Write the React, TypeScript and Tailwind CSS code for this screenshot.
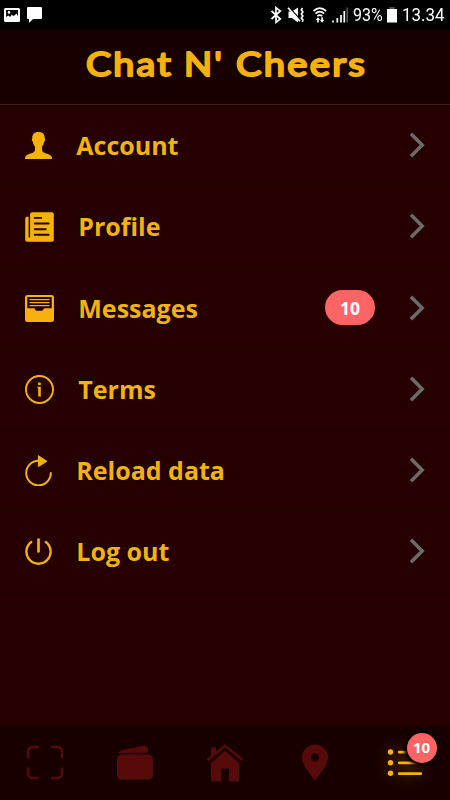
import React from 'react';

type MenuItem = {
    label: string;
    icon: React.ReactNode;
    badge?: number;
}

function Wordmark() {
    return (
        <svg width="290" height="50" viewBox="80 38 290 50" fill="#f5b20d" stroke="#f5b20d" strokeWidth="2.100" strokeLinejoin="round" className="font-[Lato,sans-serif] text-[33.500px] font-normal tracking-[2px]">
            <text x="86" y="75.900" textLength="87" lengthAdjust="spacingAndGlyphs">Chat</text>
            <text x="184" y="75.900" textLength="40" lengthAdjust="spacingAndGlyphs">N'</text>
            <text x="236" y="75.900" textLength="131" lengthAdjust="spacingAndGlyphs">Cheers</text>
        </svg>
    )
}

function UserIcon() {
    return (
        <svg width="27" height="27" viewBox="0 0 27 27" fill="currentColor">
            <path d="M13.500 0C9.200 0 7 2.600 7.200 6.600c-.7.6-.3 2.600.7 3.300.4 2 1.200 3.500 2 4.500v3.600C9.600 20.600 6.500 21.300 3.600 22.200 1.200 23 0 24.500 0 27h27c0-2.500-1.200-4-3.600-4.800-2.900-.9-6-1.600-6.300-4.200v-3.600c.8-1 1.600-2.500 2-4.500 1-.7 1.400-2.700.7-3.300C20 2.600 17.800 0 13.500 0z"/>
        </svg>
    )
}

function DocumentIcon() {
    return (
        <svg width="29" height="30" viewBox="0 0 29 30">
            <path fill="currentColor" d="M7.500 0.300H27a1.800 1.800 0 0 1 1.800 1.800V28a1.800 1.800 0 0 1-1.800 1.800H2.200A2 2 0 0 1 .2 27.800V6.800Q.2 4.800 2.200 4.800H3.600V25.600h1.500V2.100Q5.100.300 7.500.300z"/>
            <path stroke="#260000" strokeWidth="1.900" strokeLinecap="round" d="M9.700 5.900h6.500M9.700 11.500h14M9.700 17.200h11M9.700 22.800h14"/>
        </svg>
    )
}

function InboxIcon() {
    return (
        <svg width="29" height="27" viewBox="0 0 29 27">
            <rect width="29" height="27" rx="2.500" fill="currentColor"/>
            <path fill="#260000" d="M2.300 2h24.400v11.300h-7.400c-1 0-.8 2.500-2.500 2.500h-5.200c-1.700 0-1.200-2.500-2.600-2.500H2.300z"/>
            <path stroke="currentColor" strokeWidth="1.300" d="M4.500 4.700h20M4.500 7.700h20M4.500 10.700h20"/>
        </svg>
    )
}

function InfoIcon() {
    return (
        <svg width="29" height="29" viewBox="0 0 29 29" fill="none">
            <circle cx="14.500" cy="14.500" r="13.500" stroke="currentColor" strokeWidth="1.900"/>
            <rect x="13.100" y="7.600" width="2.700" height="2.500" rx=".5" fill="currentColor"/>
            <path fill="currentColor" d="M12.500 11.700H15.800V21.600H13.200V13.200h-.7z"/>
        </svg>
    )
}

function ReloadIcon() {
    return (
        <svg width="27" height="31" viewBox="0 0 27 31" fill="none">
            <path stroke="currentColor" strokeWidth="2" strokeLinecap="round" d="M13.500 5.800A12.300 12.300 0 1 0 25.800 18.100"/>
            <path fill="currentColor" stroke="currentColor" strokeLinejoin="round" d="M13.400.700L21.900 6.300l-8.500 5.300z"/>
        </svg>
    )
}

function PowerIcon() {
    return (
        <svg width="27" height="27" viewBox="0 0 27 27" fill="none" stroke="currentColor" strokeLinecap="round">
            <path strokeWidth="2.300" d="M6.200 4A12.100 12.100 0 1 0 20.800 4"/>
            <path strokeWidth="2.700" d="M13.500 1.500v12"/>
        </svg>
    )
}

function StatusBar() {
    return (
        <div className="flex h-[30px] shrink-0 items-center bg-black font-[Roboto,sans-serif] text-white">
            <svg width="48" height="30" viewBox="0 0 48 30">
                <rect x="4" y="8" width="16" height="14" rx="1.500" fill="white"/>
                <path fill="black" d="M6 10h12v6.500l-1.300-3-3 2.500-2-1.300-1.700 2.300-1.500-1.500L6.200 17z"/>
                <circle cx="9" cy="12.400" r="1.300" fill="white"/>
                <path fill="white" d="M28 7h13a1 1 0 0 1 1 1v10a1 1 0 0 1-1 1h-8l-4 4v-4h-1a1 1 0 0 1-1-1V8a1 1 0 0 1 1-1z"/>
            </svg>
            <svg className="ml-auto" width="82" height="30" viewBox="268 0 82 30" fill="none" stroke="white">
                <path strokeWidth="1.700" d="M271.500 11l8.800 8-4.300 3.300V7.700l4.300 3.300-8.800 8"/>
                <path fill="white" stroke="none" d="M288.500 11.500h3.500l6-4v15L292 18h-3.500z"/>
                <path stroke="black" strokeWidth="1.200" d="M289 7l13 14.500"/>
                <path strokeWidth="1.600" d="M288 7.800l12 13.500"/>
                <path strokeWidth="1.600" d="M302.500 8l-1.200 2 1.600 2-1.600 2 1.600 2-1.600 2 1.600 2-.6 2"/>
                <path strokeWidth="1.700" d="M313.500 11q6.300-5.700 12.600 0M315.500 13.600q4.300-3.800 8.600 0M317.400 16.200q2.400-2.100 4.800 0"/>
                <path fill="white" stroke="none" d="M315.800 20l2.200-2.700 2.200 2.700h-1.400v2.500h-1.600V20zM319.900 19.800h1.400v-2.500h1.600v2.500h1.400l-2.200 2.900z"/>
                <path strokeWidth="1.700" d="M333 20.500v2M337.300 18v4.500M341 15v7.500M344.300 11v11.500" />
                <path stroke="#555555" strokeWidth="1.600" d="M347.200 7.500v15"/>
            </svg>
            <div className="ml-[3px] -mt-px w-[31px] whitespace-nowrap"><span className="inline-block origin-left scale-x-[.89] text-[18px]">93%</span></div>
            <svg className="ml-[2px]" width="12" height="30" viewBox="386 0 12 30">
                <path fill="#555555" d="M389.500 7h5v2h-5z"/>
                <path fill="white" d="M387 9h10v13.500h-10z"/>
            </svg>
            <div className="ml-[3.500px] -mt-px w-[48.500px] whitespace-nowrap"><span className="inline-block origin-left scale-x-[.94] text-[18px]">13.34</span></div>
        </div>
    )
}

function MenuRow({item}:{item:MenuItem}) {
    return (
        <li className="flex h-[81.250px] items-center border-b border-[#1e0000] px-[25px] pt-px">
            <span className="shrink-0 text-[#f5b20d]">{item.icon}</span>
            <span className="ml-[24.300px] text-[25px] leading-none font-bold text-[#f5b20d] [text-shadow:0_0_2px_#000]">{item.label}</span>
            {item.badge !== undefined && (
                <span className="-mt-px ml-auto flex h-[35px] w-[50px] items-center justify-center rounded-full bg-[#ff6464] font-['Noto_Sans',sans-serif] text-[17.500px] font-bold text-white">{item.badge}</span>
            )}
            <svg className={item.badge !== undefined ? "-mt-px ml-[34px]" : "-mt-px ml-auto"} width="16" height="26" viewBox="0 0 16 26" fill="none">
                <path d="M2 1.800L13.200 13 2 24.200" stroke="#6b6b6b" strokeWidth="3.500"/>
            </svg>
        </li>
    )
}

function TabBar() {
    return (
        <nav className="grid h-[75px] shrink-0 grid-cols-5 place-items-center bg-[#190000] text-[#570a0a]">
            <svg width="38" height="38" viewBox="0 0 38 38" fill="none" stroke="currentColor" strokeWidth="2.300" strokeLinecap="round">
                <path d="M2 13.500V8Q2 3 7 3h5M26 3h5q5 0 5 5v5.500M2 24.500V29q0 5 5 5h5M26 34h5q5 0 5-5v-4.500"/>
            </svg>
            <svg width="38" height="38" viewBox="0 0 38 38" fill="currentColor">
                <rect x="1" y="10.500" width="36" height="25" rx="4.500"/>
                <path d="M2 9Q3.500 6.800 6 6.300L26.500 1.900Q32 1 32 6V8.500z"/>
            </svg>
            <svg width="38" height="38" viewBox="0 0 38 38" fill="currentColor">
                <path d="M5 19L19 6.800 33 19v18.500H23V24.500h-8v13H5z"/>
                <path d="M5 3.500h5v6.500l-5 4.500z"/>
                <path d="M1.500 15.900L19 1.800l17.500 14.100" fill="none" stroke="currentColor" strokeWidth="2.600"/>
                <path d="M3.300 17.800L19 4.900l15.700 12.900" fill="none" stroke="#190000" strokeWidth="1.300"/>
            </svg>
            <svg width="38" height="38" viewBox="0 0 38 38" fill="currentColor">
                <path fillRule="evenodd" d="M19 .500A13 13 0 0 0 6 13.500C6 20.500 12.500 27.500 19 37 25.500 27.500 32 20.500 32 13.500A13 13 0 0 0 19 .500zM19 9.300a4.200 4.200 0 1 1 0 8.400 4.200 4.200 0 0 1 0-8.400z"/>
            </svg>
            <div className="relative">
                <svg className="drop-shadow-[0_0_7px_#7a4a00]" width="38" height="38" viewBox="0 0 38 38" fill="#f5b20d">
                    <circle cx="4.500" cy="8" r="2.700"/>
                    <circle cx="4.500" cy="18.700" r="2.700"/>
                    <circle cx="4.500" cy="29.300" r="2.700"/>
                    <rect x="12" y="6.700" width="24" height="2.900" rx="1"/>
                    <rect x="12" y="17.400" width="24" height="2.900" rx="1"/>
                    <rect x="12" y="28.200" width="24" height="2.900" rx="1"/>
                </svg>
                <span className="absolute -top-[11px] left-[20.500px] flex size-[30px] items-center justify-center rounded-full bg-[#ff6464] pb-px font-['Noto_Sans',sans-serif] text-[15px] font-bold text-white shadow-[0_0_3px_3px_#0a0000]">10</span>
            </div>
        </nav>
    )
}

const items:MenuItem[] = [
    {label: "Account", icon: <UserIcon/>},
    {label: "Profile", icon: <DocumentIcon/>},
    {label: "Messages", icon: <InboxIcon/>, badge: 10},
    {label: "Terms", icon: <InfoIcon/>},
    {label: "Reload data", icon: <ReloadIcon/>},
    {label: "Log out", icon: <PowerIcon/>},
];

function App() {
    return (
        <div className="flex h-[800px] w-[450px] flex-col overflow-hidden bg-[#260000] font-['Open_Sans',sans-serif]">
            <StatusBar/>
            <header className="flex h-[75px] shrink-0 items-start justify-center border-b border-[#3a2020] bg-[#190000] pt-2">
                <h1><Wordmark/></h1>
            </header>
            <ul className="flex-1">
                {items.map((item) => <MenuRow key={item.label} item={item}/>)}
            </ul>
            <TabBar/>
        </div>
    )
}

export default App;
